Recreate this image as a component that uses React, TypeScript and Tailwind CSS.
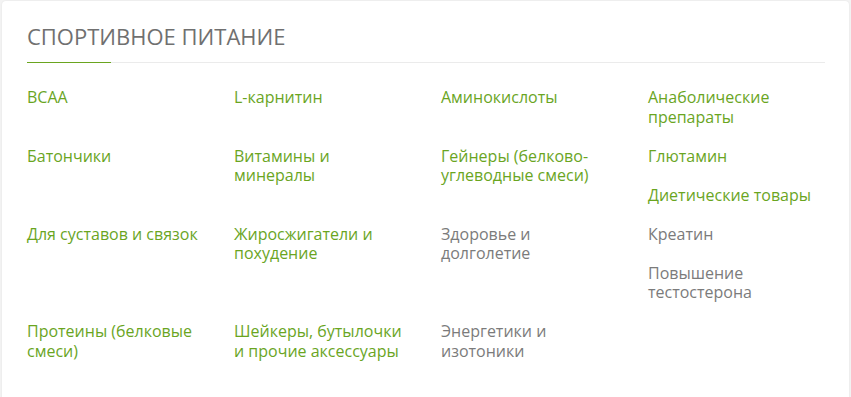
import React from "react";

type Item = { label: string; grey?: boolean };

const items: Item[] = [
  { label: "BCAA" },
  { label: "L-карнитин" },
  { label: "Аминокислоты" },
  { label: "Анаболические препараты" },
  { label: "Батончики" },
  { label: "Витамины и минералы" },
  { label: "Гейнеры (белково-углеводные смеси)" },
  { label: "Глютамин" },
  { label: "Диетические товары" },
  { label: "Для суставов и связок" },
  { label: "Жиросжигатели и похудение" },
  { label: "Здоровье и долголетие", grey: true },
  { label: "Креатин", grey: true },
  { label: "Повышение тестостерона", grey: true },
  { label: "Протеины (белковые смеси)" },
  { label: "Шейкеры, бутылочки и прочие аксессуары" },
  { label: "Энергетики и изотоники", grey: true },
];

export default function App() {
  return (
    <div className="w-[851px] h-[397px] overflow-hidden bg-[#f3f3f3] pt-px px-[2px]" style={{ fontFamily: '"Open Sans", sans-serif' }}>
      <div className="bg-white rounded-[4px] h-[420px] pl-[25px] pr-[24px] pt-[22px] shadow-[0_0_2px_rgba(0,0,0,0.08)]">
        <div className="relative border-b border-[#ebebeb] pb-[13px]">
          <h2 className="text-[22px] leading-[26px] uppercase text-[#707070] font-normal">Спортивное питание</h2>
          <div className="absolute left-0 bottom-[-1px] w-[84px] h-px bg-[#6aa51f]"></div>
        </div>
        <div className="-mx-[15px] w-[828px] pt-[25px] flow-root">
          {items.map((it) => (
            <div key={it.label} className="float-left w-[207px] px-[15px] mb-[19.5px]">
              <a className={"block text-[16px] leading-[19.5px] " + (it.grey ? "text-[#7b7b7b]" : "text-[#6aa51f]")}>{it.label}</a>
            </div>
          ))}
        </div>
      </div>
    </div>
  );
}
